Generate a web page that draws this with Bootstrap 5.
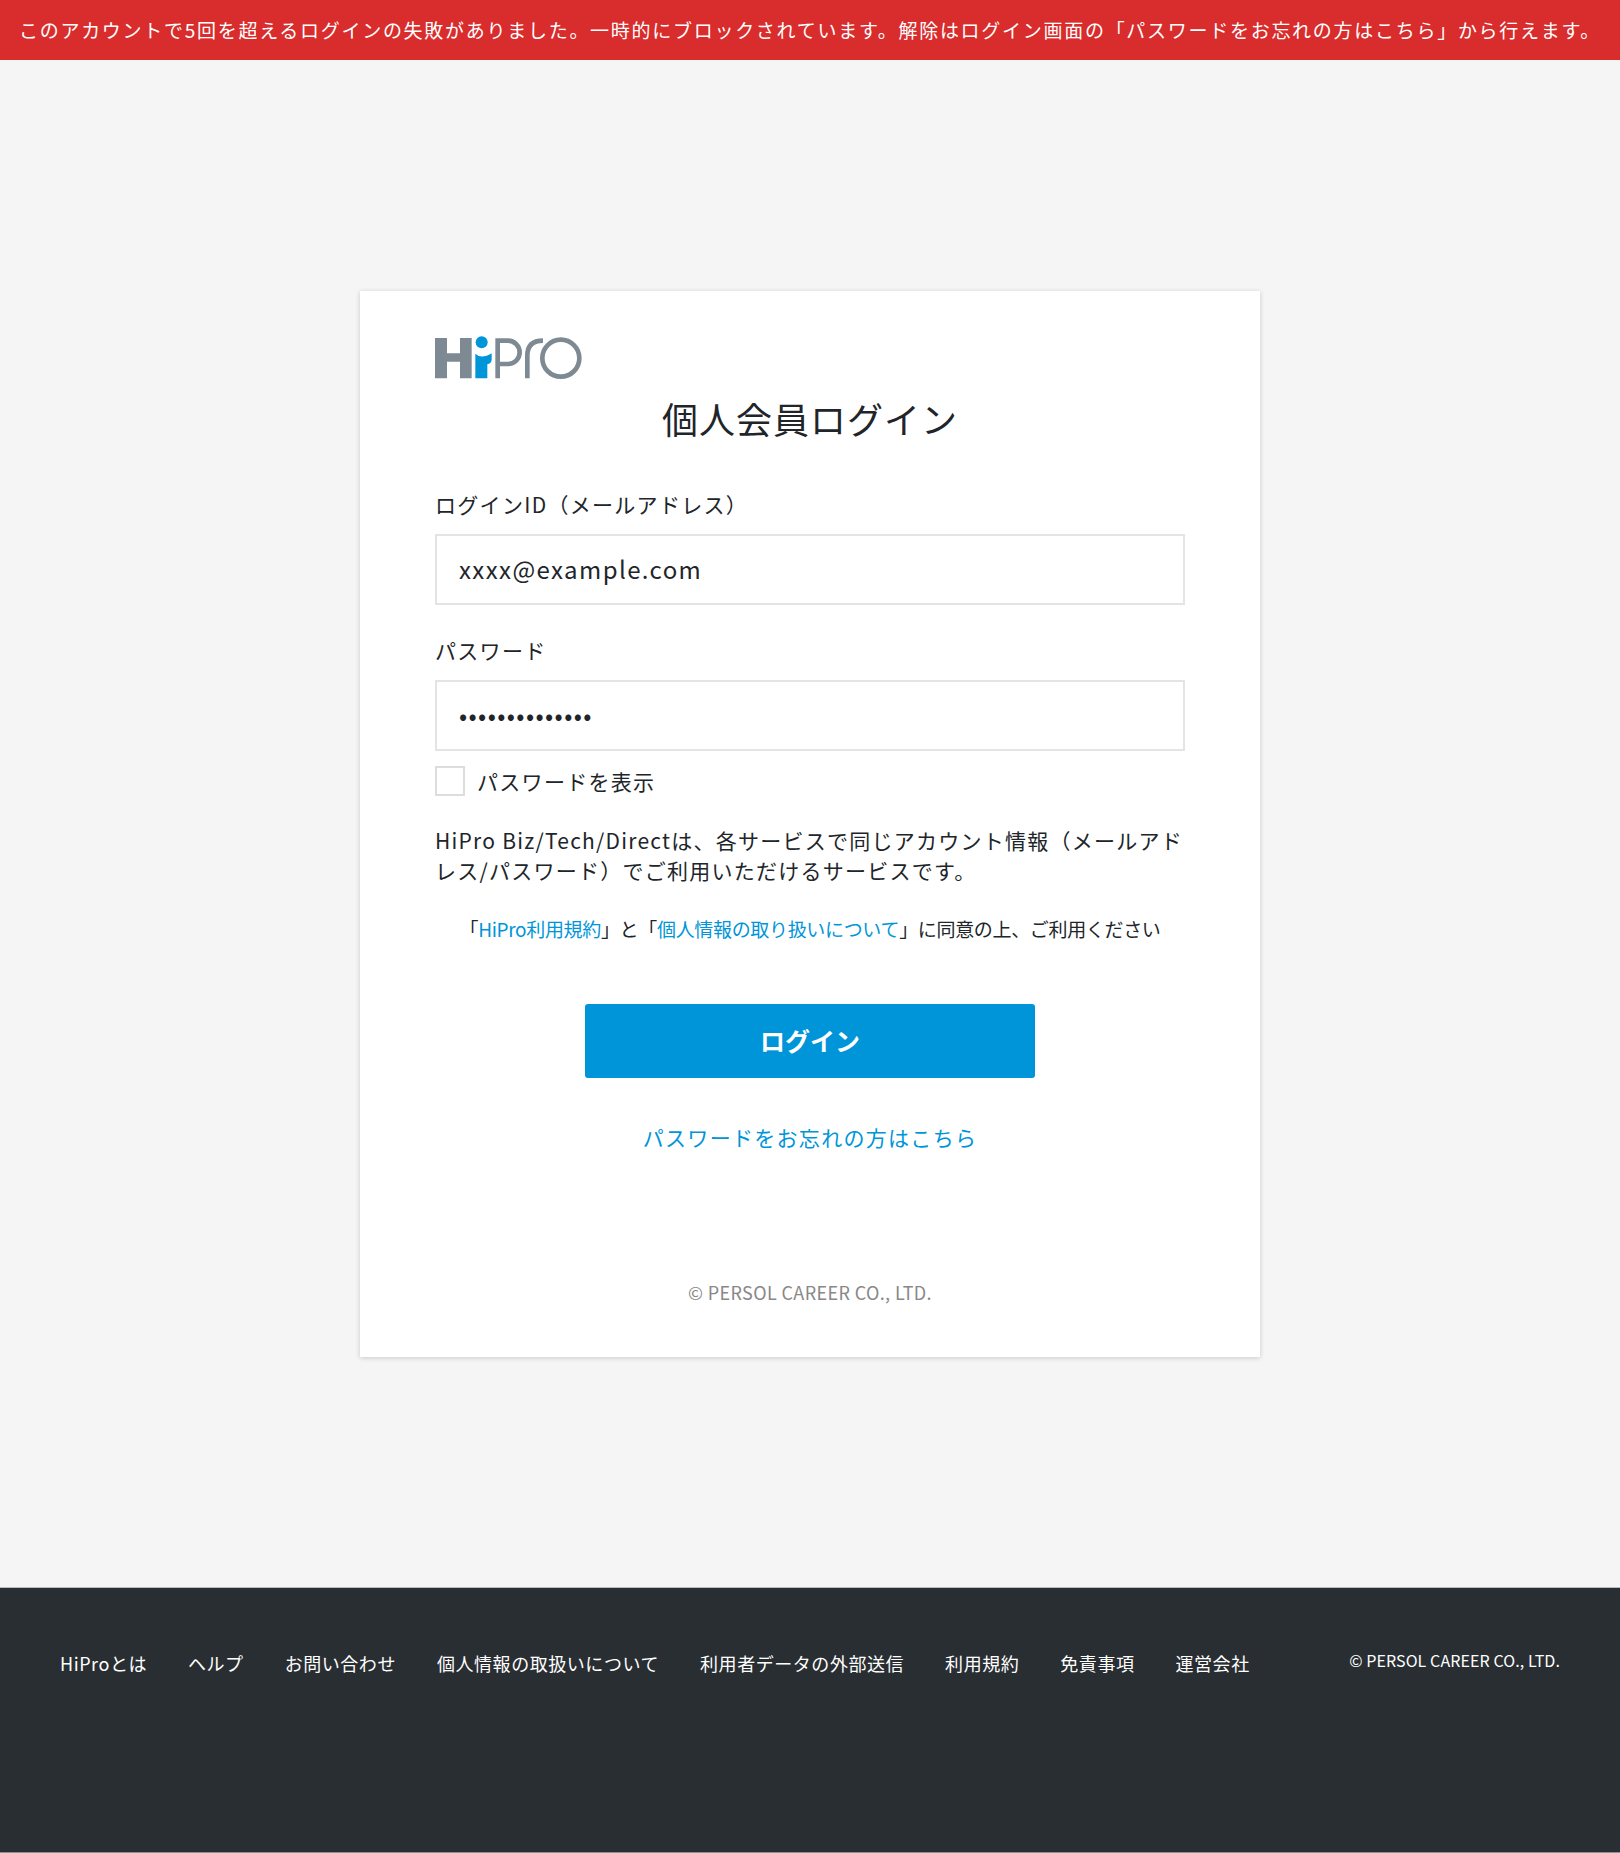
<!DOCTYPE html>
<html lang="ja"><head><meta charset="utf-8">
<link rel="stylesheet" href="https://cdn.jsdelivr.net/npm/bootstrap@5.3.0/dist/css/bootstrap.min.css">
<style>
body{background:#f5f5f5;font-family:"Noto Sans CJK JP","Noto Sans",sans-serif;color:#212529;height:1853px}
.alertbar{background:#d92c2c;color:#fff;height:60px;font-size:19px;letter-spacing:1.72px;white-space:nowrap}
.stage{height:1527px;padding-top:231px}
.panel{width:900px;height:1066px;background:#fff;box-shadow:0 1px 5px rgba(0,0,0,.18);padding:44px 75px 0}
.brand{height:44px;width:150px;display:block}
.ttl{font-size:36px;line-height:52px;font-weight:400;letter-spacing:1px;margin:13px 0 0;text-align:center}
.flabel{font-size:21px;line-height:30px;letter-spacing:1.3px;margin:0 0 15px}
.firstlabel{margin-top:45px}
.nextlabel{margin-top:30px}
.finput{height:71px;border:2px solid #e4e4e4;border-radius:0;font-size:24px;letter-spacing:1.4px;padding:0 22px 3px;color:#212529}
.chkrow{gap:12px;margin-top:15px}
.chk{width:30px;height:30px;border:2px solid #ddd;background:#fff;flex:none}
.lead-txt{font-size:21px;line-height:30px;letter-spacing:1.3px}
.introtxt{margin:29px 0 0;letter-spacing:1.25px}
.agree{font-size:19px;line-height:28px;letter-spacing:-.33px;white-space:nowrap;margin:30px 0 0}
a.lnk{color:#0095d9;text-decoration:none}
.loginbtn{width:450px;height:74px;background:#0095d9;border:0;border-radius:3px;color:#fff;font-size:25px;font-weight:700}
.btnrow{margin-top:61px}
.fgot{font-size:21px;letter-spacing:1.3px}
.fgotrow{margin-top:44px}
.copy{font-size:18px;letter-spacing:.38px;color:#888;margin-top:125px}
.foot{background:#292e32;height:266px;border-top:1px solid #bbb;border-bottom:1px solid #8a9094;padding:61px 60px 0}
.foot nav{gap:41px}
.foot a{color:#fff;text-decoration:none;font-size:18px;letter-spacing:.55px;line-height:28px}
.foot .cr{color:#fff;font-size:16px;line-height:22px;letter-spacing:.1px}
</style></head><body>
<div class="alertbar d-flex align-items-center justify-content-center">このアカウントで5回を超えるログインの失敗がありました。一時的にブロックされています。解除はログイン画面の「パスワードをお忘れの方はこちら」から行えます。</div>
<div class="stage">
<div class="panel mx-auto">
<svg class="brand" viewBox="0 0 450 132"><path d="M0 9h36v46h39V9h35v121H75V80H36v50H0z" fill="#7d8a93"/><circle cx="140" cy="22" r="18" fill="#0095d9"/><path d="M121 130V56q18 18 49-1v20q-2 11-13 13v42z" fill="#0095d9"/><path d="M188 130V17h31a35 35 0 0 1 0 70h-31M277 130V62q0-45 47-45" fill="none" stroke="#7d8a93" stroke-width="14"/><circle cx="377.500" cy="69.500" r="55.500" fill="none" stroke="#7d8a93" stroke-width="14"/></svg>
<h1 class="ttl">個人会員ログイン</h1>
<p class="flabel firstlabel">ログインID（メールアドレス）</p>
<input class="form-control finput" value="xxxx@example.com">
<p class="flabel nextlabel">パスワード</p>
<input class="form-control finput" type="password" value="12345678901234">
<div class="d-flex align-items-center chkrow"><span class="chk"></span><span class="lead-txt">パスワードを表示</span></div>
<p class="lead-txt introtxt">HiPro Biz/Tech/Directは、各サービスで同じアカウント情報（メールアドレス/パスワード）でご利用いただけるサービスです。</p>
<p class="agree text-center">「<a class="lnk" href="#">HiPro利用規約</a>」と「<a class="lnk" href="#">個人情報の取り扱いについて</a>」に同意の上、ご利用ください</p>
<div class="text-center btnrow"><button class="loginbtn">ログイン</button></div>
<div class="text-center fgotrow"><a class="lnk fgot" href="#">パスワードをお忘れの方はこちら</a></div>
<div class="text-center copy">© PERSOL CAREER CO., LTD.</div>
</div></div>
<footer class="foot d-flex justify-content-between align-items-start">
<nav class="d-flex"><a href="#">HiProとは</a><a href="#">ヘルプ</a><a href="#">お問い合わせ</a><a href="#">個人情報の取扱いについて</a><a href="#">利用者データの外部送信</a><a href="#">利用規約</a><a href="#">免責事項</a><a href="#">運営会社</a></nav>
<div class="cr">© PERSOL CAREER CO., LTD.</div>
</footer>
</body></html>
